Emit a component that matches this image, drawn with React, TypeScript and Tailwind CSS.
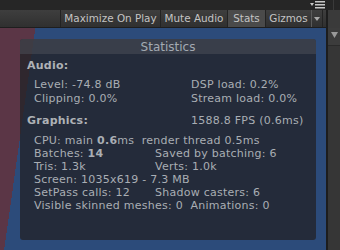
import React from "react";

const font = { fontFamily: '"DejaVu Sans", Verdana, sans-serif' };

const ToolButton = ({
  label,
  active,
  className = "",
}: {
  label: string;
  active?: boolean;
  className?: string;
}) => (
  <div
    className={`h-full flex items-center justify-center border-l border-[#232323] text-[10.4px] text-[#c4c4c4] ${
      active ? "bg-[#4a4a4a]" : ""
    } ${className}`}
  >
    {label}
  </div>
);

const App = () => {
  return (
    <div
      className="w-[340px] h-[250px] overflow-hidden flex flex-col bg-[#282828]"
      style={font}
    >
      {/* title strip */}
      <div className="h-[10px] flex justify-end items-start bg-[#262626]">
        <svg width="16" height="9" viewBox="0 0 16 9" className="mr-[7px]">
          <polygon points="0,3 4,3 2,6" fill="#c8c8c8" />
          <rect x="5" y="1" width="10" height="1.5" fill="#c8c8c8" />
          <rect x="5" y="4" width="10" height="1.5" fill="#c8c8c8" />
          <rect x="5" y="7" width="10" height="1.5" fill="#c8c8c8" />
        </svg>
        <div className="w-px h-full bg-[#3a3a3a] mr-[6px]" />
      </div>

      <div className="flex flex-1">
        <div className="w-[326px] flex flex-col">
          {/* toolbar */}
          <div className="h-[18px] flex bg-[linear-gradient(#3e3e3e,#303030)] border-b border-[#1e1e1e]">
            <div className="w-[60px]" />
            <ToolButton label="Maximize On Play" className="w-[100px]" />
            <ToolButton label="Mute Audio" className="w-[67px]" />
            <ToolButton label="Stats" active className="w-[38px]" />
            <ToolButton label="Gizmos" className="w-[46px]" />
            <div className="w-[11px] h-full flex items-center justify-center border-l border-[#5a5a5a]">
              <svg width="6" height="4" viewBox="0 0 6 4">
                <polygon points="0,0 6,0 3,4" fill="#a8a8a8" />
              </svg>
            </div>
            <div className="flex-1 border-l border-[#232323]" />
          </div>

          {/* game view */}
          <div className="flex-1 pl-[20px] pt-[11px] bg-[linear-gradient(98deg,#5b3646_35px,#2c4b7a_35px)]">
            <div className="w-[296px] h-[201px] rounded-[3px] overflow-hidden flex flex-col bg-[rgba(34,34,40,0.78)] text-[11px] tracking-[0.25px] text-[#a9aeb4]">
              <div className="h-[15px] flex items-center justify-center bg-[rgba(75,78,88,0.55)] text-[12px] tracking-normal text-[#a3aab2]">
                Statistics
              </div>
              <div className="pl-[7px] pt-[5px] leading-[14px]">
                <div className="font-bold text-[#aeb2b6]">Audio:</div>
                <div className="mt-[5px] pl-[7px] grid grid-cols-[157px_1fr]">
                  <div>Level: -74.8 dB</div>
                  <div>DSP load: 0.2%</div>
                  <div>Clipping: 0.0%</div>
                  <div>Stream load: 0.0%</div>
                </div>
                <div className="mt-[8px] grid grid-cols-[164px_1fr]">
                  <div className="font-bold text-[#aeb2b6]">Graphics:</div>
                  <div>1588.8 FPS (0.6ms)</div>
                </div>
                <div className="mt-[6px] pl-[7px] leading-[13px] grid grid-cols-[121px_1fr]">
                  <div className="col-span-2 whitespace-pre">
                    CPU: main <b>0.6</b>ms  render thread 0.5ms
                  </div>
                  <div>
                    Batches: <b>14</b>
                  </div>
                  <div>Saved by batching: 6</div>
                  <div>Tris: 1.3k</div>
                  <div>Verts: 1.0k</div>
                  <div className="col-span-2">Screen: 1035x619 - 7.3 MB</div>
                  <div>SetPass calls: 12</div>
                  <div>Shadow casters: 6</div>
                  <div className="col-span-2 whitespace-pre">
                    Visible skinned meshes: 0  Animations: 0
                  </div>
                </div>
              </div>
            </div>
          </div>
        </div>

        {/* side panel */}
        <div className="flex-1 border-l-2 border-[#1d1d1d] bg-[#383838] flex flex-col">
          <div className="h-[18px] bg-[#3a3a3a]" />
          <div className="h-[18px] pl-[3px] pt-[4px] bg-[#3c3c3c] border-b border-[#2a2a2a]">
            <svg width="7" height="6" viewBox="0 0 7 6">
              <polygon points="0,0 7,0 3.5,6" fill="#9a9a9a" />
            </svg>
          </div>
          <div className="flex-1 bg-[#363636]" />
        </div>
      </div>
    </div>
  );
};

export default App;
